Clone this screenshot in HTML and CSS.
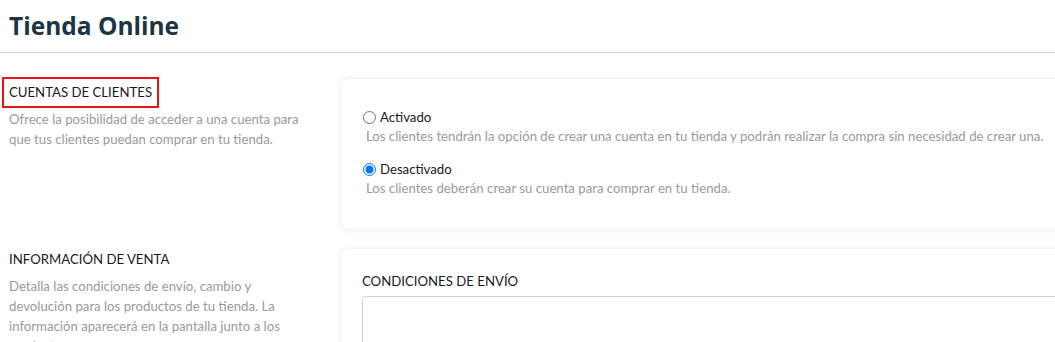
FILE: index.html
```html
<!DOCTYPE html>
<html lang="es">

<head>
	<meta charset="UTF-8">
	<title>Tienda Online</title>
	<link rel="stylesheet" href="styles.css">
</head>

<body>
	<header class="page-head">
		<h1 class="page-title">Tienda Online</h1>
	</header>

	<main class="settings">
		<section class="setting-row">
			<div class="setting-info">
				<h2 class="setting-title marked">CUENTAS DE CLIENTES</h2>
				<p class="setting-desc">Ofrece la posibilidad de acceder a una cuenta para que tus clientes puedan comprar en tu tienda.</p>
			</div>
			<div class="card card-options">
				<label class="option">
					<span class="option-label"><input type="radio" name="accounts" value="on"> Activado</span>
					<span class="option-desc">Los clientes tendrán la opción de crear una cuenta en tu tienda y podrán realizar la compra sin necesidad de crear una.</span>
				</label>
				<label class="option">
					<span class="option-label"><input type="radio" name="accounts" value="off" checked> Desactivado</span>
					<span class="option-desc">Los clientes deberán crear su cuenta para comprar en tu tienda.</span>
				</label>
			</div>
		</section>

		<section class="setting-row">
			<div class="setting-info">
				<h2 class="setting-title">INFORMACIÓN DE VENTA</h2>
				<p class="setting-desc">Detalla las condiciones de envío, cambio y devolución para los productos de tu tienda. La información aparecerá en la pantalla junto a los productos.</p>
			</div>
			<div class="card card-fields">
				<label class="field-label" for="shipping">CONDICIONES DE ENVÍO</label>
				<textarea id="shipping" class="field-area"></textarea>
			</div>
		</section>
	</main>
</body>

</html>
```

FILE: styles.css
```css
html,
body {
	margin: 0;
	padding: 0;
	overflow: hidden;
	background: #fff;
	font-family: 'Lato', sans-serif;
}

.page-head {
	height: 53px;
	border-bottom: 1px solid #d3d3d3;
	box-sizing: border-box;
	padding: 10px 9px 0;
}

.page-title {
	margin: 0;
	font-family: 'Open Sans', sans-serif;
	font-size: 24.5px;
	line-height: 32px;
	font-weight: 700;
	color: #1c3542;
}

.settings {
	display: flex;
	flex-direction: column;
	gap: 20px;
	padding: 26px 0 0 9px;
}

.setting-row {
	display: grid;
	grid-template-columns: 332px 760px;
}

.setting-info {
	padding-top: 2px;
	padding-right: 30px;
}

.setting-title {
	margin: 0;
	font-size: 13.2px;
	line-height: 17px;
	font-weight: 400;
	color: #1a1a1a;
}

.marked {
	display: inline-block;
	outline: 2px solid #e8161b;
	outline-offset: 5px;
}

.setting-desc {
	margin: 8px 0 0;
	font-size: 13.2px;
	line-height: 20px;
	color: #9a9a9a;
}

.card {
	background: #fff;
	border-radius: 8px;
	box-shadow: 0 0 6px rgba(0, 0, 0, 0.1);
}

.card-options {
	display: flex;
	flex-direction: column;
	gap: 14px;
	padding: 29px 22px 31px;
	height: 150px;
	box-sizing: border-box;
}

.option {
	display: flex;
	flex-direction: column;
}

.option-label {
	display: flex;
	align-items: center;
	font-size: 13.2px;
	line-height: 18px;
	color: #1a1a1a;
}

.option-label input {
	margin: 0 4px 0 0;
	width: 13px;
	height: 13px;
}

.option-desc {
	padding-left: 3px;
	font-size: 13.2px;
	line-height: 20px;
	color: #9a9a9a;
	white-space: nowrap;
}

.card-fields {
	display: flex;
	flex-direction: column;
	padding: 24px 21px 20px;
	height: 200px;
	box-sizing: border-box;
}

.field-label {
	font-size: 13.2px;
	line-height: 17px;
	color: #1a1a1a;
}

.field-area {
	margin-top: 6px;
	height: 120px;
	border: 1px solid #cdd4db;
	border-radius: 3px;
	resize: none;
}
```
